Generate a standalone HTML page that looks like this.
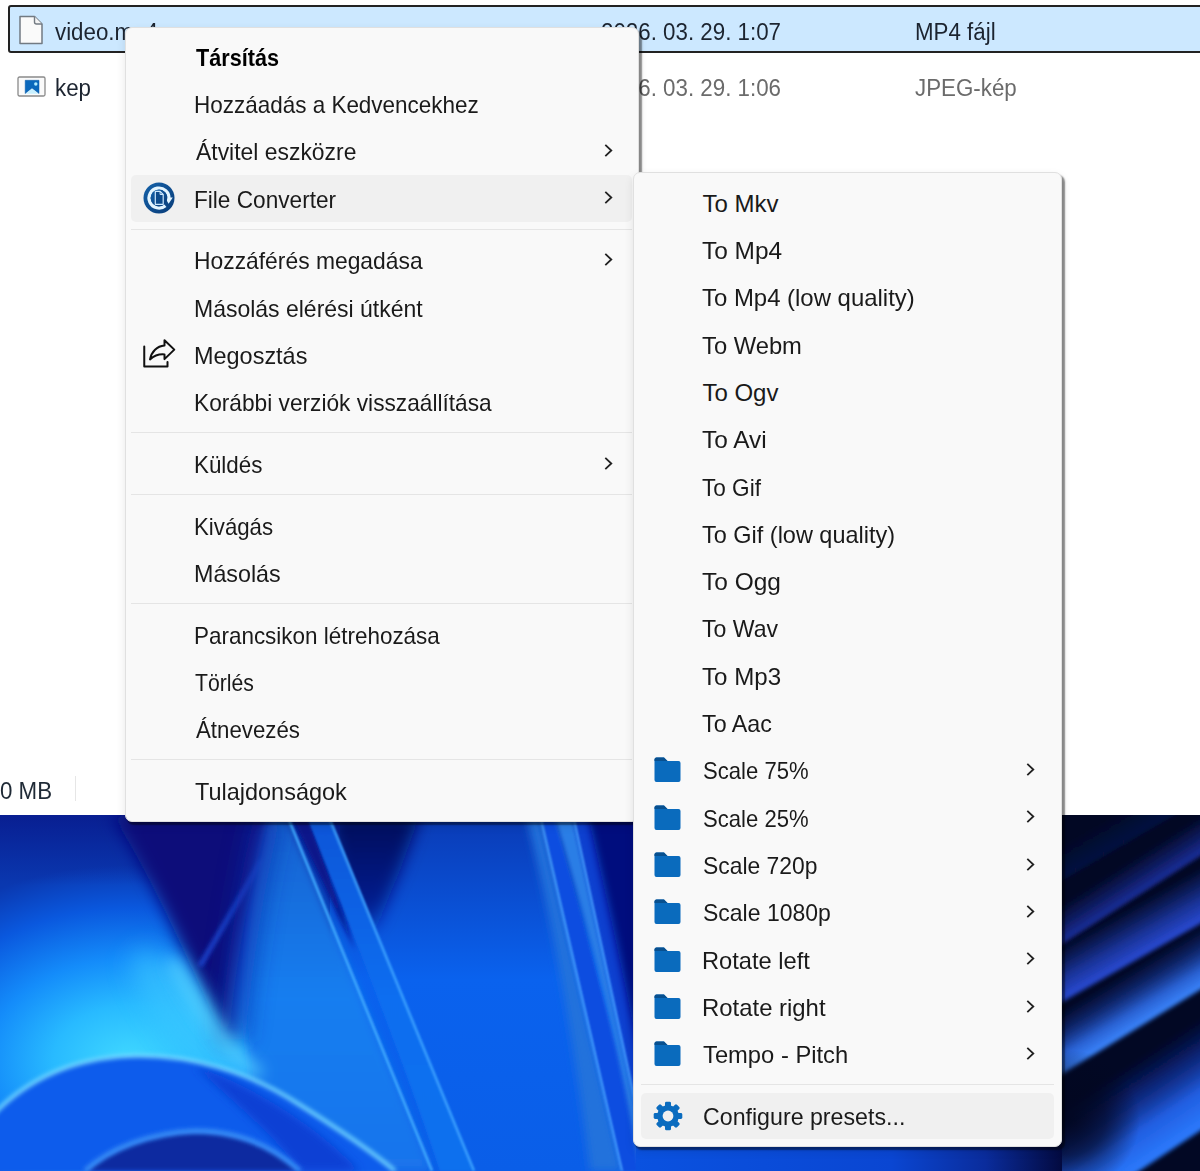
<!DOCTYPE html>
<html><head><meta charset="utf-8"><style>
html,body{margin:0;padding:0}
body{width:1200px;height:1171px;overflow:hidden;position:relative;background:#0a2a9c;font-family:"Liberation Sans",sans-serif}
.wp{position:absolute;left:0;top:815px;width:1200px;height:356px}
.exp{position:absolute;left:0;top:0;width:1200px;height:815px;background:#fff}
.t{position:absolute;white-space:nowrap;font-size:24px;line-height:24px;color:#1a1a1a;transform:scaleX(0.945);transform-origin:0 0}
.b{font-weight:bold;color:#000}
.menu{position:absolute;box-sizing:border-box;background:#f9f9f9;border:1.5px solid #e0e0e0;border-radius:7px;box-shadow:2.5px 3px 1.5px rgba(0,0,0,0.45),0 4px 10px rgba(0,0,0,0.10)}
.sep{position:absolute;height:1.2px;background:#e5e5e5}
.hl{position:absolute;background:#f0f0f0;border-radius:5px}
.chev,.ic{position:absolute}
.sel{position:absolute;left:8px;top:5px;width:1200px;height:48px;box-sizing:border-box;background:#cce8ff;border:2px solid #222;border-radius:3px}
.et{position:absolute;white-space:nowrap;font-size:23.5px;line-height:24px;color:#1c2430;transform:scaleX(0.95);transform-origin:0 0}
.g{color:#6b6b6b}
</style></head><body>
<div class="wp"><svg width="1200" height="356" viewBox="0 815 1200 356">
<defs>
<filter id="b1" filterUnits="userSpaceOnUse" x="-100" y="700" width="1400" height="600"><feGaussianBlur stdDeviation="1.2"/></filter>
<filter id="b2" filterUnits="userSpaceOnUse" x="-100" y="700" width="1400" height="600"><feGaussianBlur stdDeviation="2"/></filter>
<filter id="b4" filterUnits="userSpaceOnUse" x="-100" y="700" width="1400" height="600"><feGaussianBlur stdDeviation="4"/></filter>
<filter id="b8" filterUnits="userSpaceOnUse" x="-100" y="700" width="1400" height="600"><feGaussianBlur stdDeviation="8"/></filter>
<filter id="b12" filterUnits="userSpaceOnUse" x="-100" y="700" width="1400" height="600"><feGaussianBlur stdDeviation="12"/></filter>
<filter id="b15" filterUnits="userSpaceOnUse" x="-100" y="700" width="1400" height="600"><feGaussianBlur stdDeviation="15"/></filter>
<filter id="b25" filterUnits="userSpaceOnUse" x="-100" y="700" width="1400" height="600"><feGaussianBlur stdDeviation="25"/></filter>
<radialGradient id="glow" gradientUnits="userSpaceOnUse" cx="130" cy="1060" r="250" gradientTransform="translate(130 1060) scale(1.1 0.78) translate(-130 -1060)">
<stop offset="0" stop-color="#40d8ff"/><stop offset="0.28" stop-color="#28baff"/><stop offset="0.52" stop-color="#148cfa"/><stop offset="0.78" stop-color="#0a58de"/><stop offset="1" stop-color="#0a38b0"/>
</radialGradient>
<linearGradient id="mid" gradientUnits="userSpaceOnUse" x1="0" y1="823" x2="0" y2="1171">
<stop offset="0" stop-color="#0a3cb8"/><stop offset="0.45" stop-color="#0a62ee"/><stop offset="1" stop-color="#0a5ee8"/>
</linearGradient>
<linearGradient id="p1" gradientUnits="userSpaceOnUse" x1="0" y1="823" x2="0" y2="1171">
<stop offset="0" stop-color="#1862d0"/><stop offset="0.5" stop-color="#157ef0"/><stop offset="1" stop-color="#1a74ec"/>
</linearGradient>
<linearGradient id="p2" gradientUnits="userSpaceOnUse" x1="0" y1="823" x2="0" y2="1171">
<stop offset="0" stop-color="#0c56d8"/><stop offset="0.5" stop-color="#106ef0"/><stop offset="1" stop-color="#1070ee"/>
</linearGradient>
<linearGradient id="s0" gradientUnits="userSpaceOnUse" x1="1131" y1="842" x2="1108" y2="809">
<stop offset="0" stop-color="#0e1e60"/><stop offset="1" stop-color="#0e1e60" stop-opacity="0"/>
</linearGradient>
<linearGradient id="s1" gradientUnits="userSpaceOnUse" x1="1131" y1="901" x2="1108" y2="868">
<stop offset="0" stop-color="#2036b0"/><stop offset="0.4" stop-color="#1c30a0" stop-opacity="0.75"/><stop offset="1" stop-color="#182a90" stop-opacity="0"/>
</linearGradient>
<linearGradient id="s2" gradientUnits="userSpaceOnUse" x1="1131" y1="945" x2="1108" y2="912">
<stop offset="0" stop-color="#2e56e4"/><stop offset="0.4" stop-color="#2648d0" stop-opacity="0.8"/><stop offset="1" stop-color="#1a3ab0" stop-opacity="0"/>
</linearGradient>
<linearGradient id="s3" gradientUnits="userSpaceOnUse" x1="1132" y1="1026" x2="1108.3" y2="987.7">
<stop offset="0" stop-color="#3c88ff"/><stop offset="0.3" stop-color="#3274f4" stop-opacity="0.85"/><stop offset="0.6" stop-color="#2050d0" stop-opacity="0.35"/><stop offset="1" stop-color="#1a3ab8" stop-opacity="0"/>
</linearGradient>
<radialGradient id="low" gradientUnits="userSpaceOnUse" cx="1215" cy="1130" r="150">
<stop offset="0" stop-color="#2c7cff"/><stop offset="0.35" stop-color="#1c60ee"/><stop offset="0.7" stop-color="#0a2ea4" stop-opacity="0.7"/><stop offset="1" stop-color="#0a2a9a" stop-opacity="0"/>
</radialGradient>
<linearGradient id="topdark" gradientUnits="userSpaceOnUse" x1="0" y1="815" x2="0" y2="960">
<stop offset="0" stop-color="#040a58"/><stop offset="0.6" stop-color="#06127a" stop-opacity="0.8"/><stop offset="1" stop-color="#0a2aa0" stop-opacity="0"/>
</linearGradient>
<linearGradient id="topfade" gradientUnits="userSpaceOnUse" x1="0" y1="815" x2="0" y2="885">
<stop offset="0" stop-color="#081a8c" stop-opacity="0.85"/><stop offset="1" stop-color="#081a8c" stop-opacity="0"/>
</linearGradient>
<linearGradient id="s4" gradientUnits="userSpaceOnUse" x1="1170" y1="1155" x2="1113" y2="1073">
<stop offset="0" stop-color="#2c7cff"/><stop offset="0.35" stop-color="#2262ea" stop-opacity="0.95"/><stop offset="0.7" stop-color="#1438b0" stop-opacity="0.6"/><stop offset="1" stop-color="#0a2090" stop-opacity="0"/>
</linearGradient>
<linearGradient id="leftdark" gradientUnits="userSpaceOnUse" x1="1062" y1="0" x2="1152" y2="0">
<stop offset="0" stop-color="#020720" stop-opacity="0.9"/><stop offset="1" stop-color="#020720" stop-opacity="0"/>
</linearGradient>
<radialGradient id="ld" gradientUnits="userSpaceOnUse" cx="1070" cy="1120" r="70">
<stop offset="0" stop-color="#020720" stop-opacity="0.9"/><stop offset="0.5" stop-color="#020720" stop-opacity="0.6"/><stop offset="1" stop-color="#020720" stop-opacity="0"/>
</radialGradient>
<linearGradient id="strip" gradientUnits="userSpaceOnUse" x1="636" y1="0" x2="1062" y2="0">
<stop offset="0" stop-color="#0a52e0"/><stop offset="0.6" stop-color="#0a46d2"/><stop offset="0.82" stop-color="#0a2c9c"/><stop offset="1" stop-color="#030a40"/>
</linearGradient>
<linearGradient id="r0" gradientUnits="userSpaceOnUse" x1="1131.0" y1="840.0" x2="1116.0" y2="814.0"><stop offset="0" stop-color="#0c1a58" stop-opacity="0.6"/><stop offset="1" stop-color="#0c1a58" stop-opacity="0"/></linearGradient>
<linearGradient id="rA" gradientUnits="userSpaceOnUse" x1="1131.0" y1="900.0" x2="1112.7" y2="871.3"><stop offset="0" stop-color="#1c30a0" stop-opacity="1"/><stop offset="0.4" stop-color="#182a90" stop-opacity="0.65"/><stop offset="1" stop-color="#182888" stop-opacity="0"/></linearGradient>
<linearGradient id="rB" gradientUnits="userSpaceOnUse" x1="1131.0" y1="963.0" x2="1106.4" y2="919.5"><stop offset="0" stop-color="#2a4cd8" stop-opacity="1"/><stop offset="0.4" stop-color="#2242c0" stop-opacity="0.75"/><stop offset="1" stop-color="#1a3ab0" stop-opacity="0"/></linearGradient>
<linearGradient id="rC" gradientUnits="userSpaceOnUse" x1="1131.0" y1="1032.0" x2="1102.4" y2="985.0"><stop offset="0" stop-color="#3c88ff" stop-opacity="1"/><stop offset="0.3" stop-color="#3070f0" stop-opacity="0.85"/><stop offset="0.65" stop-color="#2050d0" stop-opacity="0.4"/><stop offset="1" stop-color="#1a3ab8" stop-opacity="0"/></linearGradient>
<linearGradient id="rD" gradientUnits="userSpaceOnUse" x1="1140.0" y1="1170.5" x2="1087.8" y2="1091.2"><stop offset="0" stop-color="#2c7cff" stop-opacity="1"/><stop offset="0.35" stop-color="#2262ea" stop-opacity="0.95"/><stop offset="0.7" stop-color="#1438b0" stop-opacity="0.55"/><stop offset="1" stop-color="#0a2090" stop-opacity="0"/></linearGradient>

</defs>
<rect x="0" y="815" width="1200" height="356" fill="#0a3ec4"/>
<!-- middle region -->
<rect x="330" y="815" width="310" height="356" fill="url(#mid)"/>
<path d="M330 815 L420 815 L400 870 L375 930 L345 920 Z" fill="url(#topdark)" filter="url(#b8)"/>
<!-- left glow petal -->
<rect x="0" y="815" width="330" height="356" fill="url(#glow)"/>
<rect x="0" y="815" width="340" height="70" fill="url(#topfade)"/>
<!-- dark wedge -->
<path d="M112 815 L270 815 C250 885 236 960 228 1048 C198 985 160 890 112 815 Z" fill="#07107a" filter="url(#b8)"/>
<ellipse cx="185" cy="1015" rx="80" ry="26" transform="rotate(52 185 1015)" fill="#3ccaff" opacity="0.6" filter="url(#b12)"/>
<path d="M262 860 L200 966" stroke="#1a44cc" stroke-width="5" fill="none" filter="url(#b2)"/>
<!-- petal 1 -->
<path d="M268 815 L287 815 L432 1171 L250 1171 L250 1070 C240 1000 242 920 268 815 Z" fill="url(#p1)" filter="url(#b4)"/>
<path d="M268 815 C252 880 240 960 232 1040" stroke="#0a2ca8" stroke-width="26" fill="none" opacity="0.7" filter="url(#b12)"/>
<path d="M291 815 L307 815 L355 950 Z" fill="#07128a" filter="url(#b2)"/>
<!-- petal 2 -->
<path d="M306 815 L328 815 L474 1171 L440 1171 C400 1050 340 900 306 815 Z" fill="url(#p2)" filter="url(#b1)"/>
<path d="M287 815 L432 1171" stroke="#40aaff" stroke-width="2.5" fill="none" filter="url(#b1)"/>
<path d="M328 815 L474 1171" stroke="#3aa0ff" stroke-width="2.5" fill="none" filter="url(#b1)"/>
<!-- right petals -->
<path d="M526 815 L540 815 L622 1171 L590 1171 C575 1050 555 930 526 815 Z" fill="#2272dc" filter="url(#b4)"/>
<path d="M541 815 L554 815 L650 1171 L622 1171 Z" fill="#0a4ee0" filter="url(#b1)"/>
<path d="M554 815 L573 815 L650 1171 L640 1171 C620 1050 590 930 554 815 Z" fill="#2a7ee6" filter="url(#b2)"/>
<path d="M573 815 L590 815 L640 1020 L650 1171 Z" fill="#0a40d0" filter="url(#b2)"/>
<path d="M588 815 L640 815 L640 1060 C625 980 605 890 588 815 Z" fill="#06107e" filter="url(#b4)"/>
<path d="M540 815 L622 1171" stroke="#4aa0ff" stroke-width="2" fill="none" filter="url(#b1)"/>
<path d="M573 815 L650 1171" stroke="#4aa0ff" stroke-width="2" fill="none" filter="url(#b1)"/>
<!-- glow edge highlight along wedge -->
<path d="M172 960 C200 1010 225 1050 260 1075" stroke="#5cd8ff" stroke-width="10" fill="none" filter="url(#b8)"/>
<!-- area below rim -->
<path d="M-10 1118 C30 1075 80 1058 130 1056 C190 1054 250 1072 300 1105 C340 1130 370 1150 395 1171 L-10 1171 Z" fill="#0a5cec" filter="url(#b1)"/>
<path d="M195 1066 C250 1085 310 1120 360 1171 L300 1171 C270 1130 230 1100 195 1066 Z" fill="#0a40d4" filter="url(#b4)"/>
<path d="M-10 1118 C30 1075 80 1058 130 1056 C190 1054 250 1072 300 1105 C340 1130 370 1150 395 1171" stroke="#70d4ff" stroke-width="4" fill="none" filter="url(#b2)"/>
<!-- lower rim -->
<path d="M85 1171 C110 1148 150 1133 195 1131 C240 1131 275 1148 300 1171 Z" fill="#0a2aa0" filter="url(#b2)"/>
<path d="M85 1171 C110 1148 150 1133 195 1131 C240 1131 275 1148 300 1171" stroke="#3a94ff" stroke-width="5" fill="none" filter="url(#b2)"/>
<!-- right region -->
<rect x="1062" y="815" width="138" height="356" fill="#020824"/>
<polygon points="889.0,980.3 1373.0,699.7 1358.0,673.7 873.9,954.4" fill="url(#r0)" filter="url(#b2)"/>
<polygon points="893.4,1051.5 1368.6,748.5 1350.4,719.8 875.1,1022.9" fill="url(#rA)" filter="url(#b2)"/>
<polygon points="887.9,1100.4 1374.1,825.6 1349.5,782.1 863.3,1056.9" fill="url(#rB)" filter="url(#b2)"/>
<polygon points="891.2,1178.0 1370.8,886.0 1342.2,839.0 862.6,1131.0" fill="url(#rC)" filter="url(#b2)"/>
<polygon points="913.0,1320.0 1367.0,1021.0 1314.8,941.7 860.7,1240.6" fill="url(#rD)" filter="url(#b2)"/>
<ellipse cx="1070" cy="1120" rx="70" ry="70" fill="url(#ld)"/>

<!-- bottom strip -->
<rect x="636" y="1135" width="426" height="45" fill="url(#strip)"/>
</svg>
</div>
<div class="exp">
<div class="sel"></div>
<svg class="ic" style="left:18px;top:15px" width="26" height="30" viewBox="0 0 26 30"><path d="M2 1.5 H16.5 L24 9 V28.5 H2 Z" fill="#fafafa" stroke="#727a82" stroke-width="1.5" stroke-linejoin="round"/><path d="M16.5 1.5 V7 Q16.5 9 18.5 9 H24" fill="#f4f4f4" stroke="#727a82" stroke-width="1.4"/></svg>
<div class="et" style="left:55px;top:20px">video.mp4</div>
<div class="et" style="left:601px;top:20px">2026. 03. 29. 1:07</div>
<div class="et" style="left:915px;top:20px">MP4 fájl</div>
<svg class="ic" style="left:17px;top:76px" width="29" height="21" viewBox="0 0 29 21"><rect x="1" y="1" width="27" height="19" rx="1.5" fill="#fafafa" stroke="#8a8a8a" stroke-width="1.3"/><path d="M8.2 4.3 H22 V17.6 L15 12.2 L8.2 17.6 Z" fill="#0a68bc" stroke="#0a5aa8" stroke-width="0.5" stroke-linejoin="round"/><path d="M8.6 17.8 L15 12.6 L21.6 17.8 Z" fill="#c8f0ff"/><circle cx="18.8" cy="8" r="1.7" fill="#b0ecff"/></svg>
<div class="et" style="left:55px;top:76px">kep</div>
<div class="et g" style="left:601px;top:76px">2026. 03. 29. 1:06</div>
<div class="et g" style="left:915px;top:76px">JPEG-kép</div>
<div class="et" style="left:0px;top:779px;color:#1f2a36">0 MB</div>
<div style="position:absolute;left:75px;top:776px;width:1px;height:25px;background:#e6e6e6"></div>
</div>
<div class="menu" style="left:124.5px;top:26.7px;width:514.5px;height:795.3px"></div>
<div class="t b" style="left:196.0px;top:45.6px;transform:scaleX(0.9011);">Társítás</div>
<div class="t" style="left:194.13px;top:92.9px;transform:scaleX(0.9362);">Hozzáadás a Kedvencekhez</div>
<div class="t" style="left:196.0px;top:140.2px;transform:scaleX(0.9545);">Átvitel eszközre</div>
<svg class="chev" style="left:603.5px;top:143.9px" width="9" height="13" viewBox="0 0 9 13"><path d="M1.3 0.9 L7.3 6.5 L1.3 12.1" fill="none" stroke="#222" stroke-width="1.8"/></svg>
<div class="hl" style="left:131px;top:175.3px;width:501px;height:46.5px"></div>
<div class="t" style="left:194.11px;top:187.5px;transform:scaleX(0.9426);">File Converter</div>
<svg class="ic" style="left:143.0px;top:182.0px" width="32" height="32" viewBox="0 0 32 32">
<defs><linearGradient id="fcg" x1="0" y1="0" x2="1" y2="1"><stop offset="0" stop-color="#1462aa"/><stop offset="1" stop-color="#0a3c78"/></linearGradient></defs>
<circle cx="16" cy="16" r="15.5" fill="url(#fcg)"/>
<path d="M22.43 23.66 A10 10 0 1 1 25.96 16.87" fill="none" stroke="#e4f5ff" stroke-width="3.2"/>
<path d="M22 15.6 L29.8 15.6 L25.6 21.8 Z" fill="#e4f5ff"/>
<circle cx="16" cy="16" r="8.3" fill="url(#fcg)"/>
<path d="M12.3 9.4 h4.8 l3.1 3.1 v9.8 h-7.9 z" fill="#0d4b8c" stroke="#cfeaff" stroke-width="1.2" stroke-linejoin="round"/>
<path d="M17.1 9.4 v3.1 h3.1" fill="none" stroke="#cfeaff" stroke-width="1"/>
</svg>
<svg class="chev" style="left:603.5px;top:191.2px" width="9" height="13" viewBox="0 0 9 13"><path d="M1.3 0.9 L7.3 6.5 L1.3 12.1" fill="none" stroke="#222" stroke-width="1.8"/></svg>
<div class="sep" style="left:131px;top:228.7px;width:501px"></div>
<div class="t" style="left:194.1px;top:249.2px;transform:scaleX(0.9521);">Hozzáférés megadása</div>
<svg class="chev" style="left:603.5px;top:252.9px" width="9" height="13" viewBox="0 0 9 13"><path d="M1.3 0.9 L7.3 6.5 L1.3 12.1" fill="none" stroke="#222" stroke-width="1.8"/></svg>
<div class="t" style="left:194.08px;top:296.5px;transform:scaleX(0.9578);">Másolás elérési útként</div>
<div class="t" style="left:194.05px;top:343.8px;transform:scaleX(0.977);">Megosztás</div>
<svg class="ic" style="left:142.0px;top:339.3px;overflow:visible" width="34" height="30" viewBox="0 0 34 30">
<path d="M2.25 7.4 V27.4 H25.5 V22.9" fill="none" stroke="#111" stroke-width="2" stroke-linejoin="round" stroke-linecap="round"/>
<path d="M8 20.4 C9.5 12.5 15 7 22.5 6.4 V1.2 L32.3 10.65 L22.5 20.1 V15.4 C16 14.8 12 16.8 8 20.4 Z" fill="none" stroke="#111" stroke-width="2" stroke-linejoin="round"/>
</svg>
<div class="t" style="left:193.71px;top:391.1px;transform:scaleX(0.9457);">Korábbi verziók visszaállítása</div>
<div class="sep" style="left:131px;top:432.3px;width:501px"></div>
<div class="t" style="left:193.74px;top:452.8px;transform:scaleX(0.9324);">Küldés</div>
<svg class="chev" style="left:603.5px;top:456.5px" width="9" height="13" viewBox="0 0 9 13"><path d="M1.3 0.9 L7.3 6.5 L1.3 12.1" fill="none" stroke="#222" stroke-width="1.8"/></svg>
<div class="sep" style="left:131px;top:494.0px;width:501px"></div>
<div class="t" style="left:193.75px;top:514.5px;transform:scaleX(0.9265);">Kivágás</div>
<div class="t" style="left:193.66px;top:561.8px;transform:scaleX(0.9698);">Másolás</div>
<div class="sep" style="left:131px;top:603.0px;width:501px"></div>
<div class="t" style="left:193.73px;top:623.5px;transform:scaleX(0.9352);">Parancsikon létrehozása</div>
<div class="t" style="left:194.72px;top:670.8px;transform:scaleX(0.8831);">Törlés</div>
<div class="t" style="left:195.6px;top:718.1px;transform:scaleX(0.927);">Átnevezés</div>
<div class="sep" style="left:131px;top:759.3px;width:501px"></div>
<div class="t" style="left:194.62px;top:779.8px;transform:scaleX(0.9779);">Tulajdonságok</div>
<div class="menu" style="left:633px;top:171.5px;width:429px;height:975.2px"></div>
<div class="t" style="left:702.4px;top:191.7px;transform:scaleX(1.0);">To Mkv</div>
<div class="t" style="left:702.38px;top:239.0px;transform:scaleX(1.0182);">To Mp4</div>
<div class="t" style="left:702.4px;top:286.3px;transform:scaleX(0.9967);">To Mp4 (low quality)</div>
<div class="t" style="left:702.41px;top:333.6px;transform:scaleX(0.9899);">To Webm</div>
<div class="t" style="left:702.4px;top:380.9px;transform:scaleX(1.0);">To Ogv</div>
<div class="t" style="left:702.38px;top:428.2px;transform:scaleX(1.018);">To Avi</div>
<div class="t" style="left:702.46px;top:475.5px;transform:scaleX(0.9403);">To Gif</div>
<div class="t" style="left:702.42px;top:522.8px;transform:scaleX(0.9779);">To Gif (low quality)</div>
<div class="t" style="left:702.38px;top:570.1px;transform:scaleX(1.02);">To Ogg</div>
<div class="t" style="left:702.44px;top:617.4px;transform:scaleX(0.9615);">To Wav</div>
<div class="t" style="left:702.39px;top:664.7px;transform:scaleX(1.0052);">To Mp3</div>
<div class="t" style="left:702.43px;top:712.0px;transform:scaleX(0.97);">To Aac</div>
<div class="t" style="left:702.58px;top:759.3px;transform:scaleX(0.9204);">Scale 75%</div>
<svg class="ic" style="left:654.0px;top:757.3px" width="27" height="26" viewBox="0 0 27 26">
<path d="M0.5 2.5 Q0.5 0.5 2.5 0.5 H10 L13.5 4 H24.5 Q26.5 4 26.5 6 V23 Q26.5 25 24.5 25 H2.5 Q0.5 25 0.5 23 Z" fill="#0a6bbd"/>
<path d="M0.5 2.5 Q0.5 0.5 2.5 0.5 H10 L13.5 4 H0.5 Z" fill="#08508f"/>
</svg>
<svg class="chev" style="left:1026.0px;top:763.0px" width="9" height="13" viewBox="0 0 9 13"><path d="M1.3 0.9 L7.3 6.5 L1.3 12.1" fill="none" stroke="#222" stroke-width="1.8"/></svg>
<div class="t" style="left:702.58px;top:806.6px;transform:scaleX(0.9204);">Scale 25%</div>
<svg class="ic" style="left:654.0px;top:804.6px" width="27" height="26" viewBox="0 0 27 26">
<path d="M0.5 2.5 Q0.5 0.5 2.5 0.5 H10 L13.5 4 H24.5 Q26.5 4 26.5 6 V23 Q26.5 25 24.5 25 H2.5 Q0.5 25 0.5 23 Z" fill="#0a6bbd"/>
<path d="M0.5 2.5 Q0.5 0.5 2.5 0.5 H10 L13.5 4 H0.5 Z" fill="#08508f"/>
</svg>
<svg class="chev" style="left:1026.0px;top:810.3px" width="9" height="13" viewBox="0 0 9 13"><path d="M1.3 0.9 L7.3 6.5 L1.3 12.1" fill="none" stroke="#222" stroke-width="1.8"/></svg>
<div class="t" style="left:702.55px;top:853.9px;transform:scaleX(0.9534);">Scale 720p</div>
<svg class="ic" style="left:654.0px;top:851.9px" width="27" height="26" viewBox="0 0 27 26">
<path d="M0.5 2.5 Q0.5 0.5 2.5 0.5 H10 L13.5 4 H24.5 Q26.5 4 26.5 6 V23 Q26.5 25 24.5 25 H2.5 Q0.5 25 0.5 23 Z" fill="#0a6bbd"/>
<path d="M0.5 2.5 Q0.5 0.5 2.5 0.5 H10 L13.5 4 H0.5 Z" fill="#08508f"/>
</svg>
<svg class="chev" style="left:1026.0px;top:857.6px" width="9" height="13" viewBox="0 0 9 13"><path d="M1.3 0.9 L7.3 6.5 L1.3 12.1" fill="none" stroke="#222" stroke-width="1.8"/></svg>
<div class="t" style="left:702.54px;top:901.2px;transform:scaleX(0.958);">Scale 1080p</div>
<svg class="ic" style="left:654.0px;top:899.2px" width="27" height="26" viewBox="0 0 27 26">
<path d="M0.5 2.5 Q0.5 0.5 2.5 0.5 H10 L13.5 4 H24.5 Q26.5 4 26.5 6 V23 Q26.5 25 24.5 25 H2.5 Q0.5 25 0.5 23 Z" fill="#0a6bbd"/>
<path d="M0.5 2.5 Q0.5 0.5 2.5 0.5 H10 L13.5 4 H0.5 Z" fill="#08508f"/>
</svg>
<svg class="chev" style="left:1026.0px;top:904.9px" width="9" height="13" viewBox="0 0 9 13"><path d="M1.3 0.9 L7.3 6.5 L1.3 12.1" fill="none" stroke="#222" stroke-width="1.8"/></svg>
<div class="t" style="left:701.53px;top:948.5px;transform:scaleX(0.986);">Rotate left</div>
<svg class="ic" style="left:654.0px;top:946.5px" width="27" height="26" viewBox="0 0 27 26">
<path d="M0.5 2.5 Q0.5 0.5 2.5 0.5 H10 L13.5 4 H24.5 Q26.5 4 26.5 6 V23 Q26.5 25 24.5 25 H2.5 Q0.5 25 0.5 23 Z" fill="#0a6bbd"/>
<path d="M0.5 2.5 Q0.5 0.5 2.5 0.5 H10 L13.5 4 H0.5 Z" fill="#08508f"/>
</svg>
<svg class="chev" style="left:1026.0px;top:952.2px" width="9" height="13" viewBox="0 0 9 13"><path d="M1.3 0.9 L7.3 6.5 L1.3 12.1" fill="none" stroke="#222" stroke-width="1.8"/></svg>
<div class="t" style="left:701.51px;top:995.8px;transform:scaleX(0.9959);">Rotate right</div>
<svg class="ic" style="left:654.0px;top:993.8px" width="27" height="26" viewBox="0 0 27 26">
<path d="M0.5 2.5 Q0.5 0.5 2.5 0.5 H10 L13.5 4 H24.5 Q26.5 4 26.5 6 V23 Q26.5 25 24.5 25 H2.5 Q0.5 25 0.5 23 Z" fill="#0a6bbd"/>
<path d="M0.5 2.5 Q0.5 0.5 2.5 0.5 H10 L13.5 4 H0.5 Z" fill="#08508f"/>
</svg>
<svg class="chev" style="left:1026.0px;top:999.5px" width="9" height="13" viewBox="0 0 9 13"><path d="M1.3 0.9 L7.3 6.5 L1.3 12.1" fill="none" stroke="#222" stroke-width="1.8"/></svg>
<div class="t" style="left:702.51px;top:1043.1px;transform:scaleX(0.9896);">Tempo - Pitch</div>
<svg class="ic" style="left:654.0px;top:1041.1px" width="27" height="26" viewBox="0 0 27 26">
<path d="M0.5 2.5 Q0.5 0.5 2.5 0.5 H10 L13.5 4 H24.5 Q26.5 4 26.5 6 V23 Q26.5 25 24.5 25 H2.5 Q0.5 25 0.5 23 Z" fill="#0a6bbd"/>
<path d="M0.5 2.5 Q0.5 0.5 2.5 0.5 H10 L13.5 4 H0.5 Z" fill="#08508f"/>
</svg>
<svg class="chev" style="left:1026.0px;top:1046.8px" width="9" height="13" viewBox="0 0 9 13"><path d="M1.3 0.9 L7.3 6.5 L1.3 12.1" fill="none" stroke="#222" stroke-width="1.8"/></svg>
<div class="sep" style="left:641px;top:1084.3px;width:413px"></div>
<div class="hl" style="left:641px;top:1092.6px;width:413px;height:46.5px"></div>
<div class="t" style="left:702.53px;top:1104.8px;transform:scaleX(0.966);">Configure presets...</div>
<svg class="ic" style="left:652.5px;top:1101.3px" width="30" height="30" viewBox="-15 -15 30 30">
<g fill="#0b6cbf">
<circle r="10.8"/>
<rect x="-3" y="-14.3" width="6" height="6" rx="1.4" transform="rotate(0)"/><rect x="-3" y="-14.3" width="6" height="6" rx="1.4" transform="rotate(45)"/><rect x="-3" y="-14.3" width="6" height="6" rx="1.4" transform="rotate(90)"/><rect x="-3" y="-14.3" width="6" height="6" rx="1.4" transform="rotate(135)"/><rect x="-3" y="-14.3" width="6" height="6" rx="1.4" transform="rotate(180)"/><rect x="-3" y="-14.3" width="6" height="6" rx="1.4" transform="rotate(225)"/><rect x="-3" y="-14.3" width="6" height="6" rx="1.4" transform="rotate(270)"/><rect x="-3" y="-14.3" width="6" height="6" rx="1.4" transform="rotate(315)"/>
</g>
<circle r="5.4" fill="#f0f0f0"/>
</svg>
</body></html>
